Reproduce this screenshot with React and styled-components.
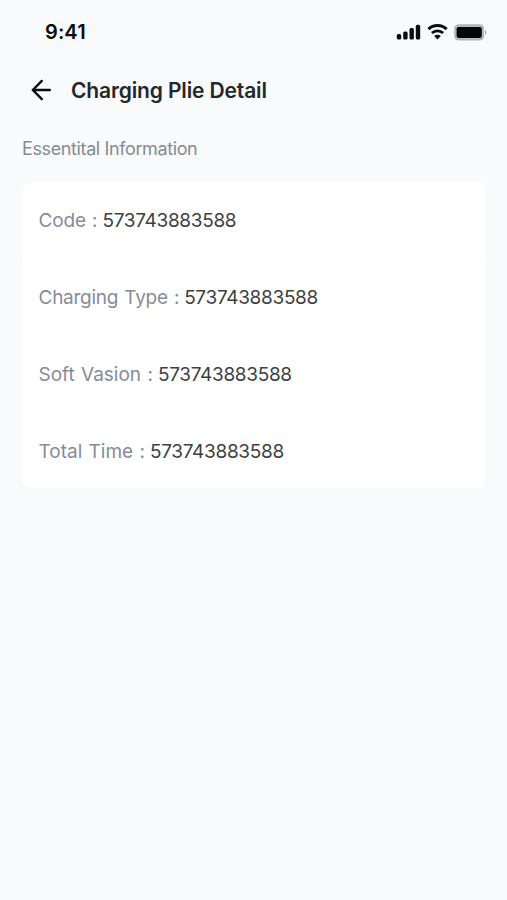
import React from 'react';
import styled, { createGlobalStyle } from 'styled-components';

const details = [
  { label: 'Code', value: '573743883588', tracking: -0.15 },
  { label: 'Charging Type', value: '573743883588', tracking: -0.25 },
  { label: 'Soft Vasion', value: '573743883588', tracking: 0 },
  { label: 'Total Time', value: '573743883588', tracking: 0 },
];

const SignalIcon = () => (
  <svg width='25' height='16' viewBox='0 0 25 16' fill='#0b0c0d'>
    <rect x='0.8' y='10' width='4.4' height='5.6' rx='1.6' />
    <rect x='7.2' y='7.4' width='4.4' height='8.2' rx='1.6' />
    <rect x='13.5' y='4' width='4.4' height='11.6' rx='1.6' />
    <rect x='19.8' y='0.8' width='4.4' height='14.8' rx='1.6' />
  </svg>
);

const WifiIcon = () => (
  <svg width='21' height='16' viewBox='0 0 21 16' fill='none'>
    <path d='M1.4 5.2a13.2 13.2 0 0 1 18.2 0' stroke='#0b0c0d' strokeWidth='3' />
    <path d='M4.9 9.1a8.2 8.2 0 0 1 11.2 0' stroke='#0b0c0d' strokeWidth='2.8' />
    <path d='M10.5 15.4 7.2 12.1a4.7 4.7 0 0 1 6.6 0z' fill='#0b0c0d' />
  </svg>
);

const BatteryIcon = () => (
  <svg width='33' height='17' viewBox='0 0 33 17'>
    <rect x='1' y='1' width='28.4' height='14.8' rx='3.8' fill='#b9babc' stroke='#b2b3b5' strokeWidth='1.6' />
    <rect x='2.6' y='2.9' width='25.2' height='11' rx='1.8' fill='#050505' />
    <path d='M31 6v4.8c1-.4 1.6-1.3 1.6-2.4S32 6.4 31 6z' fill='#b0b1b3' />
  </svg>
);

const BackIcon = () => (
  <svg width='20' height='22' viewBox='0 0 20 22' fill='none' stroke='#0b0c0d' strokeWidth='2.4' strokeLinecap='round' strokeLinejoin='round'>
    <path d='M18.8 11H1.8M10.8 1.9 1.8 11l9 9.1' />
  </svg>
);

const App = () => {
  return (
    <Wrapper>
      <GlobalStyle />
      <StatusBar>
        <Time>9:41</Time>
        <StatusIcons>
          <SignalIcon />
          <WifiIcon />
          <BatteryIcon />
        </StatusIcons>
      </StatusBar>
      <Header>
        <BackButton type='button' aria-label='Back'>
          <BackIcon />
        </BackButton>
        <Title>Charging Plie Detail</Title>
      </Header>
      <SectionTitle>Essentital Information</SectionTitle>
      <Card>
        {details.map(({ label, value, tracking }) => (
          <Row key={label}>
            <Label $tracking={tracking}>{label} :</Label>
            <Value>{value}</Value>
          </Row>
        ))}
      </Card>
    </Wrapper>
  );
};

const GlobalStyle = createGlobalStyle`
  * {
    box-sizing: border-box;
  }

  body {
    margin: 0;
    background: #f8fafc;
    font-family: Inter, 'Liberation Sans', sans-serif;
  }
`;

const Wrapper = styled.main`
  min-height: 900px;
  background: #f8fafc;
`;

const StatusBar = styled.div`
  display: flex;
  align-items: center;
  justify-content: space-between;
  height: 64px;
  padding: 0 20px 0 45px;
`;

const Time = styled.span`
  font-size: 20px;
  font-weight: 600;
  letter-spacing: 0.1px;
  color: #0b0c0d;
`;

const StatusIcons = styled.div`
  display: flex;
  align-items: center;
  gap: 6px;

  svg {
    display: block;
  }
`;

const Header = styled.header`
  display: flex;
  align-items: center;
  height: 52px;
  padding-left: 31px;
`;

const BackButton = styled.button`
  width: 20px;
  height: 22px;
  margin-right: 20px;
  padding: 0;
  border: none;
  background: transparent;
  cursor: pointer;

  svg {
    display: block;
  }
`;

const Title = styled.h1`
  margin: 0;
  font-size: 21px;
  font-weight: 600;
  letter-spacing: -0.14px;
  color: #24272b;
`;

const SectionTitle = styled.h2`
  margin: 21px 0 21px 22px;
  font-size: 18px;
  font-weight: 400;
  line-height: 24px;
  letter-spacing: -0.38px;
  color: #858b96;
`;

const Card = styled.section`
  width: 464px;
  height: 306px;
  margin-left: 22px;
  border-radius: 9px;
  background: #fff;
`;

const Row = styled.div`
  display: flex;
  align-items: center;
  gap: 5px;
  height: 77px;
  padding: 0 16.5px;
  font-size: 19px;

  &:first-child {
    border-bottom: 1px solid #fcfcfd;
  }
`;

const Label = styled.span`
  letter-spacing: ${({ $tracking }) => $tracking}px;
  word-spacing: 1px;
  color: #878b98;
`;

const Value = styled.span`
  letter-spacing: -0.32px;
  color: #3d3f43;
`;

export default App;
